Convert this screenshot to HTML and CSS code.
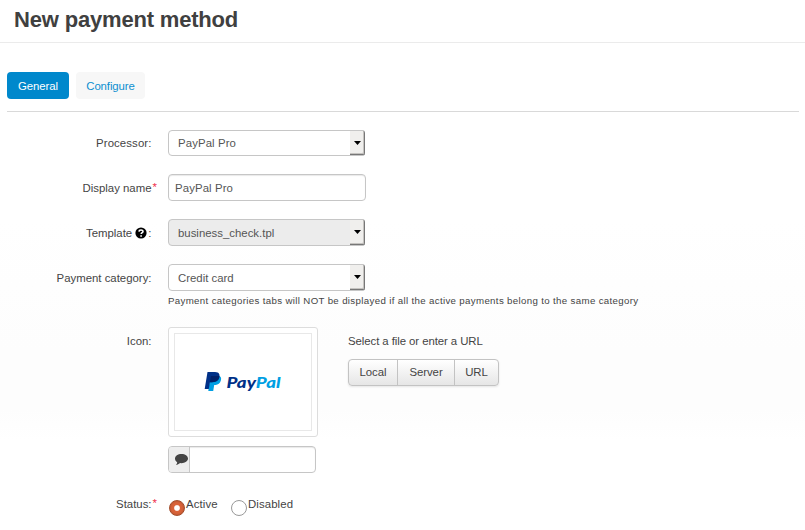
FILE: index.html
```html
<!DOCTYPE html>
<html lang="en">
<head>
<meta charset="utf-8">
<title>New payment method</title>
<link rel="stylesheet" href="styles.css">
</head>
<body>
<header class="header"><h1>New payment method</h1></header>
<main>
  <nav class="tabs"><a class="tab active"><span>General</span></a><a class="tab"><span>Configure</span></a></nav>
  <form class="form">
    <div class="row first">
      <div class="label">Processor:</div>
      <div class="select"><span>PayPal Pro</span><i class="arrow"><svg width="7" height="4"><path d="M0 0H7L3.5 4Z"/></svg></i></div>
    </div>
    <div class="row">
      <div class="label">Display name<b class="req">*</b></div>
      <div class="input">PayPal Pro</div>
    </div>
    <div class="row">
      <div class="label">Template <svg class="help" width="12" height="12" viewBox="0 0 12 12"><circle cx="6" cy="6" r="5.6"/><path d="M4 4.6C4.1 2.4 8 2.4 8 4.5C8 5.7 6.2 5.7 6.2 7.1M6.1 8.2V9.7" fill="none" stroke="#fff" stroke-width="1.6"/></svg><span class="colon">:</span></div>
      <div class="select disabled"><span>business_check.tpl</span><i class="arrow"><svg width="7" height="4"><path d="M0 0H7L3.5 4Z"/></svg></i></div>
    </div>
    <div class="row category">
      <div class="label">Payment category:</div>
      <div>
        <div class="select"><span>Credit card</span><i class="arrow"><svg width="7" height="4"><path d="M0 0H7L3.5 4Z"/></svg></i></div>
        <p class="hint">Payment categories tabs will NOT be displayed if all the active payments belong to the same category</p>
      </div>
    </div>
    <div class="row icon">
      <div class="label">Icon:</div>
      <div class="image-col">
        <div class="frame"><div class="picture">
          <svg width="78" height="22" viewBox="0 0 78 22">
            <path d="M6.2 5H14.5C18 5 17.5 9 16 11.5C14.7 13.8 12 14 10.2 14L9.2 20H4.3Z" fill="#009fe3"/>
            <path d="M3.5 1H11C15.5 1 16.2 4 15.1 7C14 10 11.5 11.2 7.8 11.2H5.9L4.8 18H.7Z" fill="#003087"/>
            <path d="M6.9 5H15.4C15.5 8.8 12.5 11.2 7.8 11.2H5.9Z" fill="#012169"/>
            <text class="logo" x="22.5" y="16.5" textLength="54" lengthAdjust="spacingAndGlyphs"><tspan fill="#003087">Pay</tspan><tspan fill="#009fe3">Pal</tspan></text>
          </svg>
        </div></div>
        <div class="alt"><span class="addon"><svg width="13" height="11" viewBox="0 0 13 11"><path d="M6.5 0C10.1 0 13 2 13 4.6S10.1 9.2 6.5 9.2L5 9.1C3.8 10.2 2.5 10.8 1 11C1.7 10.2 2.1 9.3 2.2 8.3C.9 7.5 0 6.2 0 4.6C0 2 2.9 0 6.5 0Z"/></svg></span></div>
      </div>
      <div class="upload">
        <div class="prompt">Select a file or enter a URL</div>
        <div class="buttons"><span class="btn local"><b>Local</b></span><span class="btn server"><b>Server</b></span><span class="btn url"><b>URL</b></span></div>
      </div>
    </div>
    <div class="row status">
      <div class="label">Status:<b class="req">*</b></div>
      <div class="radios">
        <i class="radio on"></i><span class="active-text">Active</span>
        <i class="radio"></i><span>Disabled</span>
      </div>
    </div>
  </form>
</main>
</body>
</html>
```
FILE: styles.css
```css
* { box-sizing: border-box; }
body { margin: 0; height: 530px; overflow: hidden; background: linear-gradient(#fff, #fff 220px, #fdfdfd 350px, #fdfdfd 410px, #fff 440px); color: #444; font: 11.4px/18px "Liberation Sans", Arial, sans-serif; letter-spacing: 0; }
.header { height: 43px; border-bottom: 1px solid #ebebeb; padding: 5px 14px; }
h1 { margin: 0; font-size: 22px; line-height: 30px; letter-spacing: -.18px; color: #404040; }
main { padding: 29px 6px 0 7px; }
.tabs { display: flex; gap: 7px; height: 40px; border-bottom: 1px solid #d9d9d9; }
.tab { height: 27px; padding: 5px 0; width: 69px; text-align: center; border-radius: 4px; background: #f7f7f7; color: #0d8fd0; letter-spacing: -.1px; }
.tab.active { width: 62px; background: #08c; color: #fff; }
.form { padding-top: 18px; }
.row { display: flex; height: 45px; align-items: flex-start; }
.row.first { height: 44px; }
.first .select { height: 26px; }
.first .arrow { height: 24px; }
.label { width: 161px; padding: 4px 16.5px 0 0; text-align: right; flex: none; position: relative; white-space: nowrap; }
.row:not(.first) .label { padding-top: 5px; }
.req { position: absolute; right: 11px; top: 4px; color: #f0304c; font-weight: normal; letter-spacing: 0; }
.help { vertical-align: -2px; }
.colon { margin-left: 1px; }
.select, .input { height: 27px; border: 1px solid #c6c6c6; border-radius: 4px; background: #fff; color: #555; }
.select { width: 197px; display: flex; justify-content: space-between; padding-left: 9px; line-height: 26px; border-radius: 4px 2px 2px 4px; }
.first .select { line-height: 25px; }
.select.disabled { background: #ececec; }
.arrow { width: 15px; height: 25px; display: flex; align-items: center; justify-content: center; background: #f0efed; border-right: 1px solid #777; border-bottom: 1px solid #777; box-shadow: inset -1px -1px #c5c3c0; border-radius: 0 2px 2px 0; margin-right: -1px; }
.arrow svg { fill: #000; margin-left: 1px; }
.input { width: 198px; padding-left: 6px; line-height: 26px; box-shadow: inset 0 1px 1px #e9e9e9; letter-spacing: .1px; }
.first .select, .first .label { letter-spacing: .1px; }
.category { height: 63px; }
.hint { margin: 1px 0 0; font-size: 9.7px; line-height: 18px; letter-spacing: .34px; white-space: nowrap; }
.icon { height: 163px; }
.image-col { width: 180px; }
.frame { width: 150px; height: 110px; border: 1px solid #ddd; border-radius: 3px; padding: 5px; background: #fff; }
.picture { height: 98px; border: 1px solid #e8e8e8; display: flex; align-items: center; justify-content: center; }
.logo { font: italic 900 15px Lato, sans-serif; letter-spacing: 0; }
.alt { width: 148px; height: 27px; margin-top: 9px; border: 1px solid #c6c6c6; border-radius: 4px; background: #fff; overflow: hidden; box-shadow: inset 0 1px 1px #e9e9e9; }
.addon { display: block; width: 21px; height: 25px; background: #eee; border-right: 1px solid #c6c6c6; padding: 7px 0 0 6px; }
.addon svg { display: block; fill: #444; }
.prompt { padding-top: 5px; height: 32px; letter-spacing: -.07px; }
.buttons { display: flex; width: 151px; height: 27px; border: 1px solid #c3c3c3; border-radius: 4px; background: linear-gradient(#fff, #e6e6e6); box-shadow: 0 1px 2px #e5e5e5; line-height: 25px; text-align: center; letter-spacing: -.05px; }
.btn b { font-weight: normal; }
.local { width: 48px; border-right: 1px solid #c3c3c3; }
.local { width: 49px; }
.server { width: 57px; border-right: 1px solid #c3c3c3; }
.url { width: 43px; }
.radios { display: flex; padding-top: 5px; letter-spacing: .1px; }
.radio { width: 16px; height: 16px; border: 1px solid #999; border-radius: 50%; margin: 5px 1px 0; background: #fff; }
.radio.on { border-color: #a34d2b; background: radial-gradient(circle, #fff 2.3px, #d9633a 3.5px); box-shadow: inset 0 0 2px #a34d2b; }
.active-text { width: 44px; }
```
